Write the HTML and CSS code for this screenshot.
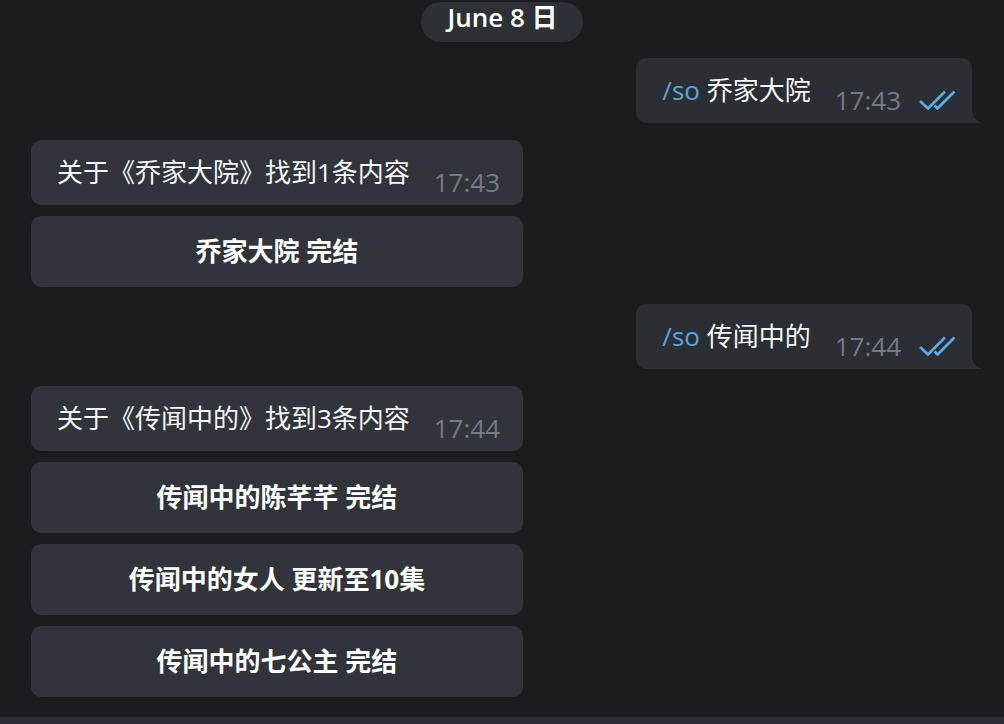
FILE: index.html
```html
<!DOCTYPE html>
<html lang="zh">
<head>
<meta charset="utf-8">
<title>Chat</title>
<link rel="stylesheet" href="styles.css">
</head>
<body>
<main class="chat">
  <div class="date-row"><span class="date-pill">June 8 日</span></div>

  <div class="msg out">
    <div class="bubble bubble-out">
      <span class="text"><span class="cmd">/so</span> 乔家大院</span>
      <span class="time">17:43</span>
      <svg class="checks" viewBox="0 0 40 22" width="40" height="22" aria-hidden="true">
        <path d="M3 14 L10 20.5 L26 4.5" />
        <path d="M17.5 18.5 L19.5 20.5 L35.5 4.5" />
      </svg>
    </div>
  </div>

  <div class="msg in">
    <div class="group">
      <div class="bubble bubble-in">
        <span class="text">关于《乔家大院》找到1条内容</span>
        <span class="time">17:43</span>
      </div>
      <div class="keyboard">
        <div class="kb-btn">乔家大院 完结</div>
      </div>
    </div>
  </div>

  <div class="msg out">
    <div class="bubble bubble-out">
      <span class="text"><span class="cmd">/so</span> 传闻中的</span>
      <span class="time">17:44</span>
      <svg class="checks" viewBox="0 0 40 22" width="40" height="22" aria-hidden="true">
        <path d="M3 14 L10 20.5 L26 4.5" />
        <path d="M17.5 18.5 L19.5 20.5 L35.5 4.5" />
      </svg>
    </div>
  </div>

  <div class="msg in">
    <div class="group">
      <div class="bubble bubble-in">
        <span class="text">关于《传闻中的》找到3条内容</span>
        <span class="time">17:44</span>
      </div>
      <div class="keyboard">
        <div class="kb-btn">传闻中的陈芊芊 完结</div>
        <div class="kb-btn">传闻中的女人 更新至10集</div>
        <div class="kb-btn">传闻中的七公主 完结</div>
      </div>
    </div>
  </div>
</main>
<footer class="composer"></footer>
</body>
</html>
```

FILE: styles.css
```css
* { box-sizing: border-box; }

html, body {
  margin: 0;
  padding: 0;
  height: 100%;
}

body {
  background: #1a1c20;
  font-family: "Open Sans", "Noto Sans CJK SC", sans-serif;
  color: #f4f5f6;
  display: flex;
  flex-direction: column;
  overflow: hidden;
}

.chat {
  flex: 1;
  display: flex;
  flex-direction: column;
  padding: 2px 0 0;
}

.date-row {
  display: flex;
  justify-content: center;
}

.date-pill {
  background: #2d3136;
  border-radius: 20px;
  height: 40px;
  padding: 2px 25px 12px 26px;
  font-size: 26px;
  line-height: 26px;
  font-weight: 600;
  color: #ffffff;
}

.msg {
  display: flex;
  margin-top: 17px;
}

.date-row + .msg { margin-top: 16px; }

.msg.out {
  justify-content: flex-end;
  padding-right: 32px;
}

.msg.in {
  justify-content: flex-start;
  padding-left: 31px;
}

.bubble {
  display: flex;
  align-items: flex-end;
  position: relative;
  font-size: 26px;
}

.bubble .text {
  padding-top: 16px;
  margin-bottom: 17px;
  line-height: 32px;
  white-space: nowrap;
}

.bubble .time {
  line-height: 26px;
  margin-bottom: 10px;
  margin-left: 24px;
  color: #737b84;
  white-space: nowrap;
}

.bubble-out {
  background: #2b2f34;
  border-radius: 10px 10px 0 10px;
  padding: 0 14px 0 26px;
}

.bubble-out::after {
  content: "";
  position: absolute;
  right: -12px;
  bottom: 0;
  width: 12px;
  height: 12px;
  background: radial-gradient(circle at 100% 0, transparent 11.5px, #2b2f34 12px);
}

.cmd { color: #5aa4de; }

.checks {
  margin-left: 17px;
  margin-bottom: 13px;
  fill: none;
  stroke: #5aabe6;
  stroke-width: 2.7;
  stroke-linecap: square;
  stroke-linejoin: miter;
}

.group {
  width: 492px;
  display: flex;
  flex-direction: column;
  gap: 11px;
}

.bubble-in {
  background: #31353b;
  border-radius: 10px;
  padding: 0 23px 0 26px;
}

.bubble-in .time { margin-left: auto; }

.keyboard {
  display: flex;
  flex-direction: column;
  gap: 11px;
}

.kb-btn {
  height: 71px;
  background: #31353b;
  border-radius: 10px;
  display: flex;
  align-items: center;
  justify-content: center;
  padding-bottom: 3px;
  font-size: 26px;
  font-weight: 700;
  color: #ffffff;
  white-space: nowrap;
}

.composer {
  flex: 0 0 7px;
  background: #2b2f35;
}
```
